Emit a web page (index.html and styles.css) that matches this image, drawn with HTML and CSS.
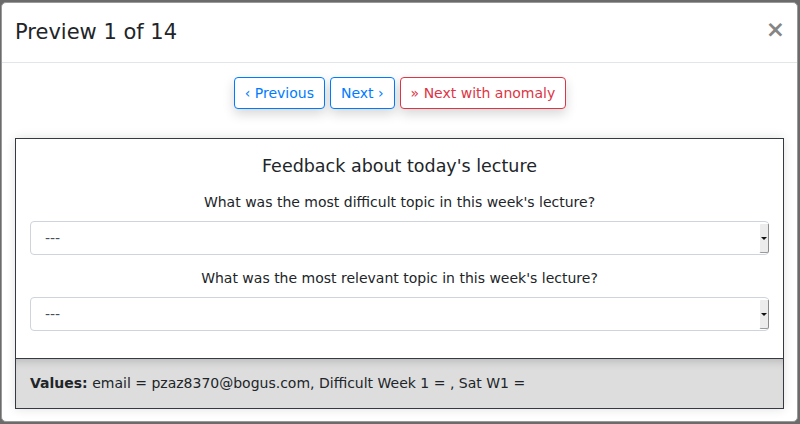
FILE: index.html
```html
<!DOCTYPE html>
<html>
<head>
<meta charset="utf-8">
<link rel="stylesheet" href="styles.css">
</head>
<body>
<div class="modal">
  <div class="modal-header">
    <h5 class="modal-title">Preview 1 of 14</h5>
    <span class="close">×</span>
  </div>
  <div class="modal-body">
    <div class="nav-buttons">
      <button class="btn btn-blue">‹ Previous</button>
      <button class="btn btn-blue">Next ›</button>
      <button class="btn btn-red">» Next with anomaly</button>
    </div>
    <div class="card">
      <div class="form">
        <div class="form-title">Feedback about today's lecture</div>
        <div class="group">
          <div class="label">What was the most difficult topic in this week's lecture?</div>
          <div class="select"><span class="value">---</span><span class="arrow"><span class="tri"></span></span></div>
        </div>
        <div class="group last">
          <div class="label">What was the most relevant topic in this week's lecture?</div>
          <div class="select"><span class="value">---</span><span class="arrow"><span class="tri"></span></span></div>
        </div>
      </div>
      <div class="footer"><b>Values:</b> email = pzaz8370@bogus.com, Difficult Week 1 = , Sat W1 =</div>
    </div>
  </div>
</div>
</body>
</html>
```
FILE: styles.css
```css
html, body {
  margin: 0;
  padding: 0;
}
body {
  background: #6b6b6b;
  width: 800px;
  height: 424px;
  overflow: hidden;
  font-family: "DejaVu Sans", sans-serif;
  color: #212529;
}
.modal {
  margin: 2px 2px 0 1px;
  width: 795px;
  height: 418px;
  background: #fff;
  border: 1px solid #9a9a9a;
  border-radius: 5px;
}
.modal-header {
  display: flex;
  justify-content: space-between;
  align-items: center;
  padding: 14px 15px 15px 13px;
  border-bottom: 1px solid #e3e6e9;
  height: 30px;
}
.modal-title {
  margin: 0;
  font-size: 21px;
  font-weight: 400;
  line-height: 30px;
}
.close {
  font-size: 23px;
  font-weight: 700;
  color: #858585;
  line-height: 24px;
  margin-right: -3px;
  margin-top: -7px;
}
.modal-body {
  padding: 14px 13px 0 13px;
}
.nav-buttons {
  display: flex;
  justify-content: center;
  gap: 5px;
  margin-left: 1px;
}
.btn {
  font-family: "DejaVu Sans", sans-serif;
  font-size: 14px;
  line-height: 20px;
  padding: 5px 10px;
  background: #fff;
  border: 1px solid;
  border-radius: 4px;
  box-shadow: 0 5px 12px rgba(0,0,0,0.16);
}
.btn-blue {
  color: #007bff;
  border-color: #007bff;
}
.btn-red {
  color: #dc3545;
  border-color: #dc3545;
}
.card {
  margin-top: 29px;
  border: 1px solid #343a40;
  box-shadow: 0 0 10px rgba(0,0,0,0.12);
}
.form {
  padding: 14px 14px 27px;
}
.form-title {
  text-align: center;
  font-size: 17.5px;
  line-height: 27px;
  margin-bottom: 12px;
}
.group {
  margin-bottom: 13px;
}
.group.last {
  margin-bottom: 0;
}
.label {
  text-align: center;
  font-size: 14px;
  line-height: 21px;
  margin-bottom: 8px;
}
.select {
  display: flex;
  justify-content: space-between;
  height: 32px;
  border: 1px solid #ced4da;
  border-radius: 4px;
  background: #fff;
}
.value {
  font-size: 14px;
  line-height: 32px;
  color: #495057;
  padding-left: 14px;
}
.arrow {
  width: 8px;
  margin: 1px -1px 1px 0;
  background: #ececec;
  border: 1px solid #fff;
  border-right-color: #8a8a8a;
  border-bottom-color: #9a9a9a;
  border-radius: 2px;
  display: flex;
  align-items: center;
  justify-content: center;
}
.tri {
  width: 0;
  height: 0;
  border-left: 3px solid transparent;
  border-right: 3px solid transparent;
  border-top: 3px solid #111;
}
.footer {
  border-top: 1px solid #343a40;
  background: #dddddd;
  padding: 14px 14px 14px;
  font-size: 14px;
  line-height: 21px;
  box-shadow: inset 0 8px 10px -6px rgba(0,0,0,0.18);
}
.footer b {
  font-weight: 700;
}
```
